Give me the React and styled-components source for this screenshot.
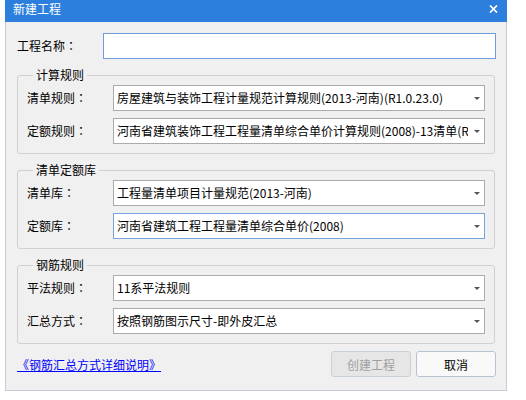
import React from 'react'
import styled, { createGlobalStyle } from 'styled-components'

const GlobalStyle = createGlobalStyle`
  html, body {
    margin: 0;
    padding: 0;
    background: #ffffff;
  }
  body {
    font-family: "Noto Sans CJK SC", "Noto Sans", "Liberation Sans", sans-serif;
    font-size: 12px;
    color: #000;
  }
  * { box-sizing: border-box; }
`

const groups = [
  {
    title: '计算规则',
    rows: [
      { label: '清单规则', value: '房屋建筑与装饰工程计量规范计算规则(2013-河南)(R1.0.23.0)' },
      { label: '定额规则', value: '河南省建筑装饰工程工程量清单综合单价计算规则(2008)-13清单(R' },
    ],
  },
  {
    title: '清单定额库',
    rows: [
      { label: '清单库', value: '工程量清单项目计量规范(2013-河南)' },
      { label: '定额库', value: '河南省建筑工程工程量清单综合单价(2008)', focused: true },
    ],
  },
  {
    title: '钢筋规则',
    rows: [
      { label: '平法规则', value: '11系平法规则' },
      { label: '汇总方式', value: '按照钢筋图示尺寸-即外皮汇总' },
    ],
  },
]

const CloseIcon = () => (
  <svg width="9" height="8" viewBox="0 0 9 8">
    <path d="M1 0.5 L8 7.5 M8 0.5 L1 7.5" stroke="#fff" strokeWidth="1.7" />
  </svg>
)

const App = () => {
  return (
    <Page>
      <GlobalStyle />
      <Window>
        <TitleBar>
          <Title>新建工程</Title>
          <CloseBtn><CloseIcon /></CloseBtn>
        </TitleBar>
        <Body>
          <NameRow>
            <Label>工程名称<Colon>：</Colon></Label>
            <TextInput />
          </NameRow>
          {groups.map((g) => (
            <Group key={g.title}>
              <Legend>{g.title}</Legend>
              {g.rows.map((r) => (
                <Row key={r.label}>
                  <Label>{r.label}<Colon>：</Colon></Label>
                  <Combo $focused={r.focused}>
                    <ComboText>{r.value}</ComboText>
                    <Arrow />
                  </Combo>
                </Row>
              ))}
            </Group>
          ))}
          <Footer>
            <HelpLink href="#">《钢筋汇总方式详细说明》</HelpLink>
            <Buttons>
              <Button disabled>创建工程</Button>
              <Button>取消</Button>
            </Buttons>
          </Footer>
        </Body>
      </Window>
    </Page>
  )
}

export default App

// 窗口
const Page = styled.div`
  width: 526px;
  height: 400px;
  padding-left: 5px;
`

const Window = styled.div`
  width: 502px;
  height: 391px;
  display: flex;
  flex-direction: column;
`

const TitleBar = styled.div`
  height: 22px;
  flex: none;
  background: #2d7fdd;
  display: flex;
  align-items: flex-start;
  justify-content: space-between;
  padding: 1px 9px 0 8px;
`

const Title = styled.div`
  color: #fff;
  font-size: 12px;
  line-height: 16px;
`

const CloseBtn = styled.div`
  margin-top: 4px;
  display: flex;
`

const Body = styled.div`
  flex: 1;
  background: #f0f0f0;
  border: 1px solid #c5cbd8;
  border-top: none;
  padding: 11px 11px 0 11px;
  display: flex;
  flex-direction: column;
  gap: 8px;
`

// 입력 행
const NameRow = styled.div`
  display: flex;
  align-items: center;
  margin-right: -1px;
`

const Label = styled.div`
  width: 86px;
  flex: none;
  line-height: 16px;
  color: #000;
`

// 전각 콜론 가운데 정렬
const Colon = styled.span`
  font-family: "Noto Sans CJK TC", "Noto Sans CJK SC", sans-serif;
`

const TextInput = styled.div`
  flex: 1;
  height: 26px;
  background: #fff;
  border: 1px solid #6f9ddc;
`

// 그룹
const Group = styled.fieldset`
  margin: 0;
  padding: 2px 9px 9px 9px;
  border: 1px solid #d0d0d0;
  border-radius: 3px;
  display: flex;
  flex-direction: column;
  gap: 7px;
  min-width: 0;
`

const Legend = styled.legend`
  margin-left: 6px;
  padding: 0 3px;
  font-size: 12px;
  line-height: 16px;
  color: #000;
`

const Row = styled.div`
  display: flex;
  align-items: center;
`

const Combo = styled.div`
  flex: 1;
  min-width: 0;
  height: 26px;
  background: #fff;
  border: 1px solid ${(p) => (p.$focused ? '#7aa3dc' : '#ababab')};
  display: flex;
  align-items: center;
  padding: 0 4px 0 3px;
`

const ComboText = styled.div`
  flex: 1;
  min-width: 0;
  white-space: nowrap;
  overflow: hidden;
  line-height: 16px;
  color: #000;
`

const Arrow = styled.div`
  flex: none;
  width: 0;
  height: 0;
  margin-left: 6px;
  border-left: 3px solid transparent;
  border-right: 3px solid transparent;
  border-top: 3px solid #555;
`

// 하단
const Footer = styled.div`
  display: flex;
  align-items: center;
  justify-content: space-between;
  margin-top: -1px;
  margin-right: -1px;
`

const HelpLink = styled.a`
  color: #0000ff;
  text-decoration: underline;
  line-height: 16px;
  margin-top: 2px;
`

const Buttons = styled.div`
  display: flex;
  gap: 5px;
`

const Button = styled.button`
  width: 80px;
  height: 26px;
  font-family: inherit;
  font-size: 12px;
  border-radius: 3px;
  border: 1px solid ${(p) => (p.disabled ? '#c9d0d8' : '#b9c3cf')};
  background: ${(p) => (p.disabled ? '#e6e6e6' : '#f9f9f9')};
  color: ${(p) => (p.disabled ? '#a0a0a0' : '#000')};
  padding: 0;
`
